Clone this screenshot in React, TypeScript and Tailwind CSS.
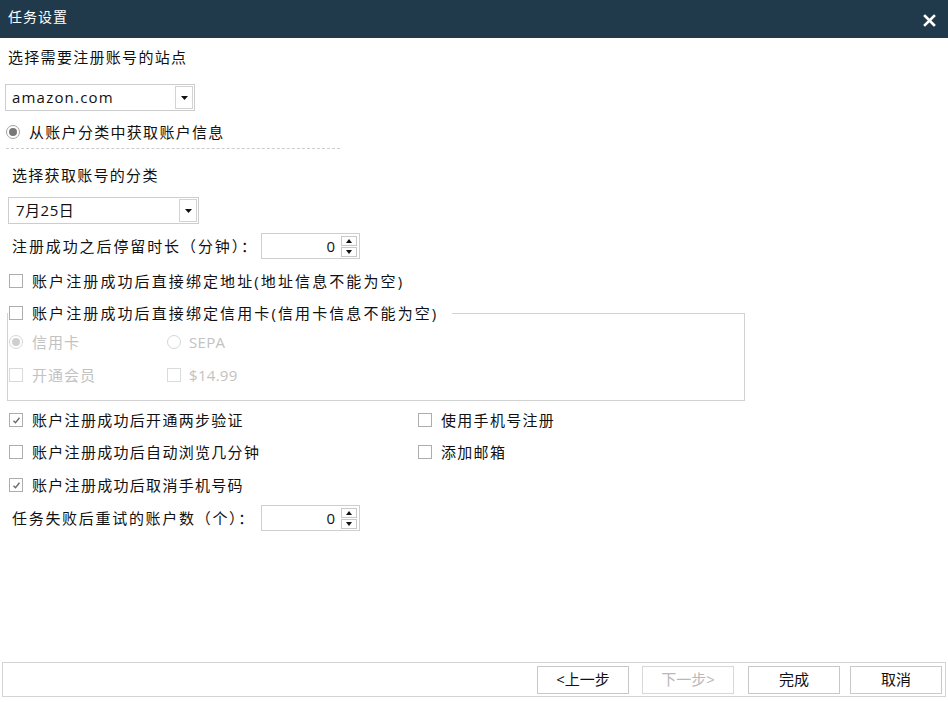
import React from "react";

function Checkbox({ checked = false, disabled = false }: { checked?: boolean; disabled?: boolean }) {
  return (
    <span
      className={`w-[14px] h-[14px] border bg-white flex items-center justify-center shrink-0 ${
        disabled ? "border-[#dadada]" : "border-[#adadad]"
      }`}
    >
      {checked && (
        <svg width="9" height="9" viewBox="0 0 9 9">
          <path d="M1.5 4.8 L3.5 6.8 L7.5 1.8" fill="none" stroke="#6a6a6a" strokeWidth="1.4" />
        </svg>
      )}
    </span>
  );
}

function Radio({ checked = false, disabled = false }: { checked?: boolean; disabled?: boolean }) {
  return (
    <span
      className={`w-[14px] h-[14px] rounded-full border bg-white flex items-center justify-center shrink-0 ${
        disabled ? "border-[#d6d6d6]" : "border-[#a3a3a3]"
      }`}
    >
      {checked && (
        <span className={`w-[8px] h-[8px] rounded-full ${disabled ? "bg-[#cfcfcf]" : "bg-[#777777]"}`} />
      )}
    </span>
  );
}

function Dropdown({ text, cls, textCls }: { text: string; cls: string; textCls: string }) {
  return (
    <div className={`h-[27px] border border-[#cdcdcd] bg-white flex items-center justify-between ${cls}`}>
      <span className={textCls}>{text}</span>
      <span className="w-[18px] h-[23px] mr-[1px] border border-[#d3d3d3] flex items-center justify-center">
        <svg width="7" height="4" viewBox="0 0 7 4">
          <path d="M0 0 L7 0 L3.5 4 Z" fill="#111" />
        </svg>
      </span>
    </div>
  );
}

function SpinBox() {
  return (
    <div className="w-[99px] h-[26px] border border-[#cfcfcf] bg-white flex items-center">
      <span className="flex-1 text-right pr-[6px] text-[15px] leading-none">0</span>
      <span className="flex flex-col gap-[1px] mr-[2px]">
        <span className="w-[16px] h-[10px] border border-[#c8c8c8] flex items-center justify-center">
          <svg width="6" height="4" viewBox="0 0 6 4">
            <path d="M0 4 L6 4 L3 0 Z" fill="#111" />
          </svg>
        </span>
        <span className="w-[16px] h-[10px] border border-[#c8c8c8] flex items-center justify-center">
          <svg width="6" height="4" viewBox="0 0 6 4">
            <path d="M0 0 L6 0 L3 4 Z" fill="#111" />
          </svg>
        </span>
      </span>
    </div>
  );
}

function CheckRow({ label, checked = false, wide = false }: { label: string; checked?: boolean; wide?: boolean }) {
  return (
    <div className="flex items-center gap-[9px]">
      <Checkbox checked={checked} />
      <span className={wide ? "tracking-[2.1px]" : "tracking-[1.3px]"}>{label}</span>
    </div>
  );
}

export default function App() {
  return (
    <div className="w-[948px] h-[702px] flex flex-col bg-white text-[15px] text-[#111111] font-['Open_Sans','Noto_Sans_CJK_SC',sans-serif] leading-none">
      <div className="h-[38px] shrink-0 bg-[#203a4b] flex items-center justify-between pl-[8px] pr-[12px]">
        <span className="text-[14px] tracking-[1px] text-white mb-[4px]">任务设置</span>
        <svg width="13" height="13" viewBox="0 0 13 13" className="mt-[2px]">
          <path d="M2 2 L11 11 M11 2 L2 11" stroke="#ffffff" strokeWidth="2.6" strokeLinecap="square" />
        </svg>
      </div>

      <div className="h-[38px] flex items-center pl-[8px] tracking-[1.3px]">选择需要注册账号的站点</div>

      <Dropdown text="amazon.com" cls="mt-[8px] ml-[5px] w-[190px]" textCls="pl-[6px] text-[15px] tracking-[1.2px]" />

      <div className="mt-[10px] h-[22px] ml-[6px] flex items-center gap-[9px]">
        <Radio checked />
        <span className="tracking-[1.3px]">从账户分类中获取账户信息</span>
      </div>
      <div className="mt-[5px] ml-[6px] w-[334px] border-t border-dashed border-[#cccccc]" />

      <div className="mt-[15px] h-[22px] flex items-center pl-[12px] tracking-[1.3px]">选择获取账号的分类</div>

      <Dropdown text="7月25日" cls="mt-[11px] ml-[8px] w-[191px]" textCls="pl-[7px] text-[15px] tracking-[0.5px]" />

      <div className="mt-[9px] h-[26px] flex items-center pl-[12px]">
        <span className="w-[249px] tracking-[1.9px]">注册成功之后停留时长（分钟）：</span>
        <SpinBox />
      </div>

      <div className="mt-[11px] h-[22px] flex items-center pl-[9px]">
        <CheckRow label="账户注册成功后直接绑定地址(地址信息不能为空)" wide />
      </div>

      <fieldset className="mt-[10px] ml-[7px] w-[738px] h-[99px] border border-[#d2d2d2]">
        <legend className="h-[22px] pl-[1px] pr-[14px] flex items-center">
          <CheckRow label="账户注册成功后直接绑定信用卡(信用卡信息不能为空)" wide />
        </legend>
        <div className="mt-[7px] h-[22px] flex items-center pl-[1px] text-[#c2c2c2]">
          <div className="w-[158px] flex items-center gap-[9px]">
            <Radio checked disabled />
            <span className="tracking-[1px]">信用卡</span>
          </div>
          <div className="flex items-center gap-[8px]">
            <Radio disabled />
            <span className="tracking-[0.3px]">SEPA</span>
          </div>
        </div>
        <div className="mt-[11px] h-[22px] flex items-center pl-[1px] text-[#c2c2c2]">
          <div className="w-[158px] flex items-center gap-[9px]">
            <Checkbox disabled />
            <span className="tracking-[1px]">开通会员</span>
          </div>
          <div className="flex items-center gap-[8px]">
            <Checkbox disabled />
            <span className="tracking-[0.3px]">$14.99</span>
          </div>
        </div>
      </fieldset>

      <div className="mt-[8px] h-[22px] flex items-center pl-[9px]">
        <div className="w-[409px]">
          <CheckRow label="账户注册成功后开通两步验证" checked />
        </div>
        <CheckRow label="使用手机号注册" />
      </div>
      <div className="mt-[10px] h-[22px] flex items-center pl-[9px]">
        <div className="w-[409px]">
          <CheckRow label="账户注册成功后自动浏览几分钟" />
        </div>
        <CheckRow label="添加邮箱" />
      </div>
      <div className="mt-[11px] h-[22px] flex items-center pl-[9px]">
        <CheckRow label="账户注册成功后取消手机号码" checked />
      </div>

      <div className="mt-[9px] h-[26px] flex items-center pl-[12px]">
        <span className="w-[249px] tracking-[1.7px]">任务失败后重试的账户数（个）：</span>
        <SpinBox />
      </div>

      <div className="flex-1" />

      <div className="mx-[2px] mb-[5px] h-[35px] shrink-0 border border-[#d4d4d4] flex items-center justify-end pr-[3px]">
        <button className="w-[92px] h-[28px] border border-[#c8c8c8] bg-white">&lt;上一步</button>
        <button className="ml-[13px] w-[92px] h-[28px] border border-[#d8d8d8] bg-white text-[#b8b8b8]">下一步&gt;</button>
        <button className="ml-[14px] w-[92px] h-[28px] border border-[#c8c8c8] bg-white">完成</button>
        <button className="ml-[10px] w-[92px] h-[28px] border border-[#c8c8c8] bg-white">取消</button>
      </div>
    </div>
  );
}
